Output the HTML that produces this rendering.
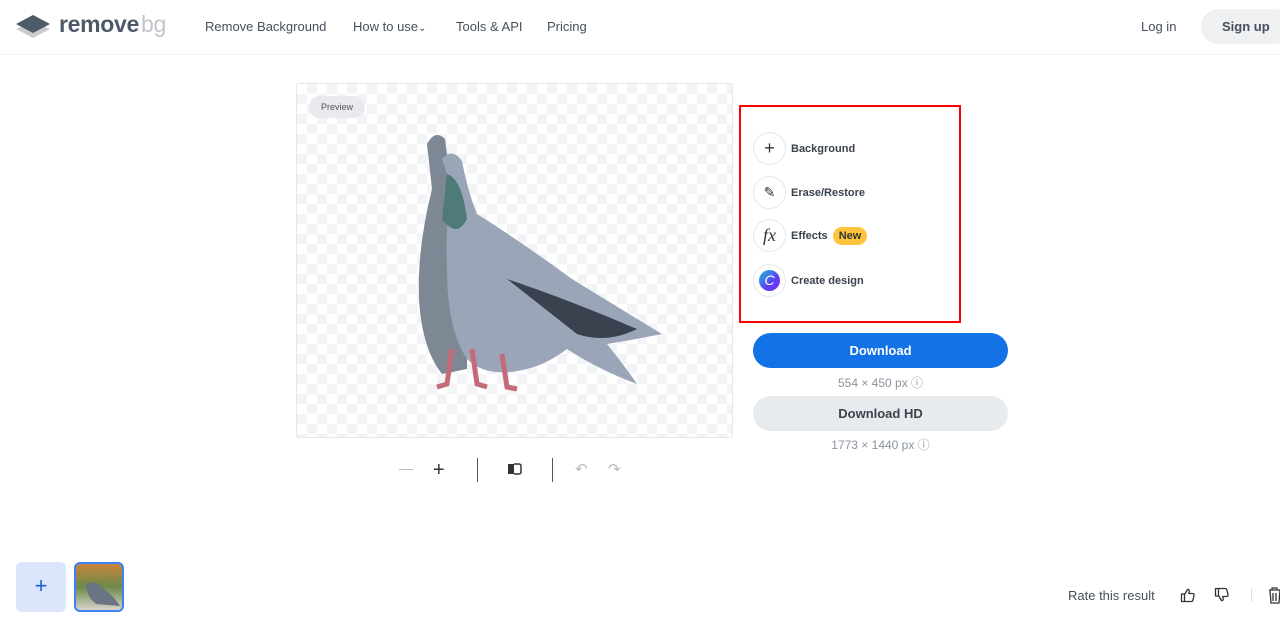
<!DOCTYPE html>
<html><head><meta charset="utf-8"><style>
*{box-sizing:border-box;margin:0;padding:0}
body{width:1280px;height:633px;overflow:hidden;background:#fff;font-family:"Liberation Sans",sans-serif;color:#454f5b;position:relative}
.hdr{position:absolute;left:0;top:0;width:1280px;height:55px;border-bottom:1px solid #f1f2f4}
.nav{position:absolute;top:19px;font-size:13px;color:#454f5b}
.card{position:absolute;left:296px;top:83px;width:437px;height:355px;border:1px solid #e5e7eb;border-radius:3px;
background-color:#fff;background-image:linear-gradient(45deg,#f3f4f6 25%,transparent 25%,transparent 75%,#f3f4f6 75%),linear-gradient(45deg,#f3f4f6 25%,transparent 25%,transparent 75%,#f3f4f6 75%);background-size:20px 20px;background-position:0 0,10px 10px}
.pv{position:absolute;left:12px;top:12px;background:#e8eaed;border-radius:12px;font-size:9px;padding:6px 12px;color:#555}
.red{position:absolute;left:739px;top:105px;width:222px;height:218px;border:2px solid #f00}
.item{position:absolute;left:753px;display:flex;align-items:center;font-size:11px;font-weight:bold;color:#3a434d}
.ic{width:33px;height:33px;border-radius:50%;border:1px solid #e5e7eb;margin-right:5px;display:flex;align-items:center;justify-content:center;font-size:18px;color:#333;font-weight:normal}
.btn{position:absolute;left:753px;width:255px;height:35px;border-radius:18px;text-align:center;line-height:35px;font-size:13px;font-weight:bold}
.sub{position:absolute;left:753px;width:255px;text-align:center;font-size:12px;color:#8a939d}
</style></head><body>
<div class="hdr">
<svg style="position:absolute;left:16px;top:14px" width="34" height="26" viewBox="0 0 34 26"><path d="M0 15 L17 24 L34 15 L17 8Z" fill="#c8ccd1"/><path d="M0 10 L17 19 L34 10 L17 1Z" fill="#4e5a68"/></svg>
<div style="position:absolute;left:59px;top:11px;font-size:23px;font-weight:bold;color:#4e5a68;letter-spacing:-0.3px">remove<span style="color:#c0c5cb;font-weight:normal;margin-left:2px">bg</span></div>
<div class="nav" style="left:205px">Remove Background</div>
<div class="nav" style="left:353px">How to use<span style="font-size:10px">⌄</span></div>
<div class="nav" style="left:456px">Tools &amp; API</div>
<div class="nav" style="left:547px">Pricing</div>
<div class="nav" style="left:1141px">Log in</div>
<div style="position:absolute;left:1201px;top:9px;width:90px;height:35px;border-radius:18px;background:#eef0f2;font-size:13px;font-weight:bold;line-height:35px;padding-left:21px;color:#454f5b">Sign up</div>
</div>
<div class="card"><div class="pv">Preview</div>
<svg style="position:absolute;left:110px;top:45px" width="260" height="265" viewBox="0 0 260 265">
<path d="M20 15 Q28 0 38 10 Q42 40 45 60 Q55 110 60 150 Q60 200 60 240 L35 245 Q15 220 12 170 Q10 120 25 60Z" fill="#7e8794"/>
<path d="M35 30 Q45 18 55 32 Q60 60 70 85 Q110 110 165 150 Q230 190 255 205 Q230 210 200 215 Q220 240 230 255 Q190 240 160 220 Q140 235 120 240 Q80 250 60 230 Q40 200 40 140 Q38 90 45 60Z" fill="#9aa6b8"/>
<path d="M40 45 Q55 50 60 90 Q50 110 35 90Z" fill="#4f7a7a"/>
<path d="M100 150 Q160 170 230 200 Q200 215 170 205Z" fill="#3a4250"/>
<path d="M45 220 L40 255 L30 258 M65 220 L70 255 L80 258 M95 225 L100 258 L110 260" stroke="#c46a78" stroke-width="5" fill="none"/>
</svg>
</div>
<div style="position:absolute;left:399px;top:469px;width:14px;height:1px;background:#bbb"></div>
<div style="position:absolute;left:433px;top:459px;font-size:20px;color:#333">+</div>
<div style="position:absolute;left:477px;top:458px;width:1px;height:24px;background:#555"></div>
<svg style="position:absolute;left:507px;top:462px" width="16" height="14"><rect x="1" y="2" width="6" height="10" fill="#333"/><path d="M7 2h5a2 2 0 0 1 2 2v6a2 2 0 0 1-2 2h-5" stroke="#333" fill="none" stroke-width="1.5"/></svg>
<div style="position:absolute;left:552px;top:458px;width:1px;height:24px;background:#555"></div>
<div style="position:absolute;left:575px;top:460px;font-size:15px;color:#bbb">↶</div>
<div style="position:absolute;left:608px;top:460px;font-size:15px;color:#bbb">↷</div>
<div class="red"></div>
<div class="item" style="top:132px"><div class="ic">+</div>Background</div>
<div class="item" style="top:176px"><div class="ic" style="font-size:14px">✎</div>Erase/Restore</div>
<div class="item" style="top:219px"><div class="ic" style="font-style:italic;font-family:'Liberation Serif',serif">fx</div>Effects <span style="background:#ffc43d;border-radius:9px;padding:3px 6px;margin-left:5px;color:#333">New</span></div>
<div class="item" style="top:264px"><div class="ic"><div style="width:21px;height:21px;border-radius:50%;background:linear-gradient(135deg,#1fc3d9,#5a3ef0 60%,#7b2ff7);color:#fff;font-size:14px;text-align:center;line-height:21px;font-style:italic">C</div></div>Create design</div>
<div class="btn" style="top:333px;background:#1272e6;color:#fff">Download</div>
<div class="sub" style="top:374px">554 × 450 px ⓘ</div>
<div class="btn" style="top:396px;background:#e8ebee;color:#3a434d">Download HD</div>
<div class="sub" style="top:436px">1773 × 1440 px ⓘ</div>
<div style="position:absolute;left:16px;top:562px;width:50px;height:50px;border-radius:6px;background:#dbe6fd;color:#1a5fd6;font-size:22px;text-align:center;line-height:48px">+</div>
<div style="position:absolute;left:74px;top:562px;width:50px;height:50px;border-radius:6px;border:2px solid #3b82f6;background:linear-gradient(#c7853a,#6d8a4a 50%,#d8d4cc);overflow:hidden"><svg width="46" height="46"><path d="M10 20 Q20 15 28 25 Q40 35 44 42 L20 40 Q10 32 10 20Z" fill="#6b7483"/></svg></div>
<div style="position:absolute;left:1068px;top:588px;font-size:13px;color:#454f5b">Rate this result</div>
<svg style="position:absolute;left:1180px;top:587px" width="16" height="16" viewBox="0 0 16 16"><path d="M1.5 7h3v7.5h-3zM4.5 7.5L7.5 2.5Q9.5 2 9.2 4.5L8.7 6.5H13Q14.5 6.8 14 8.5L12.8 13.5Q12.4 14.5 11.4 14.5H4.5" fill="none" stroke="#333" stroke-width="1.3" stroke-linejoin="round"/></svg>
<svg style="position:absolute;left:1214px;top:587px" width="16" height="16" viewBox="0 0 16 16" transform="scale(1,-1)"><path d="M1.5 7h3v7.5h-3zM4.5 7.5L7.5 2.5Q9.5 2 9.2 4.5L8.7 6.5H13Q14.5 6.8 14 8.5L12.8 13.5Q12.4 14.5 11.4 14.5H4.5" fill="none" stroke="#333" stroke-width="1.3" stroke-linejoin="round"/></svg>
<div style="position:absolute;left:1251px;top:588px;width:1px;height:14px;background:#ddd"></div>
<svg style="position:absolute;left:1268px;top:586px" width="12" height="18"><path d="M1 4h11M4 4V2h5v2M2 4l1 13h8l1-13M5 7v8M8 7v8" stroke="#333" fill="none" stroke-width="1.3"/></svg>
</body></html>
